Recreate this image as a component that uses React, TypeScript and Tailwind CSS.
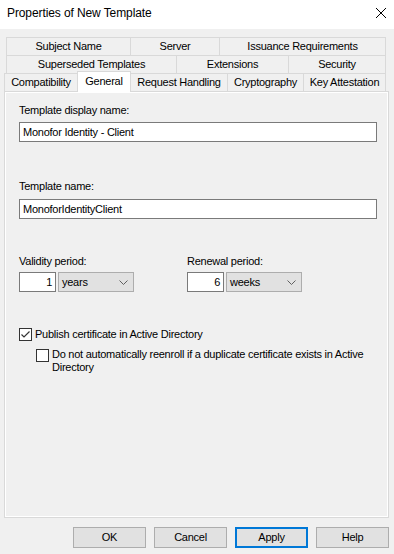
import React from "react"

const tabRows = [
	{
		left: "ml-[6px]",
		tabs: [
			{ label: "Subject Name", w: "w-[124px]" },
			{ label: "Server", w: "w-[89px]" },
			{ label: "Issuance Requirements", w: "w-[167px]" },
		],
	},
	{
		left: "ml-[6px]",
		tabs: [
			{ label: "Superseded Templates", w: "w-[170px]" },
			{ label: "Extensions", w: "w-[112px]" },
			{ label: "Security", w: "w-[98px]" },
		],
	},
]

const bottomTabs = [
	{ label: "Compatibility", w: "w-[73px]" },
	{ label: "General", w: "w-[54px]", active: true },
	{ label: "Request Handling", w: "w-[97px]" },
	{ label: "Cryptography", w: "w-[76px]" },
	{ label: "Key Attestation", w: "w-[83px]" },
]

const Chevron = () => (
	<svg width="9" height="5" viewBox="0 0 9 5" className="text-[#606060]">
		<path d="M0.5 0.5 L4.5 4.5 L8.5 0.5" fill="none" stroke="currentColor" strokeWidth="1" />
	</svg>
)

const Checkbox = ({ checked }: { checked?: boolean }) => (
	<div className="w-[13px] h-[13px] shrink-0 border border-[#333333] bg-white flex items-center justify-center">
		{checked && (
			<svg width="11" height="11" viewBox="0 0 11 11">
				<path d="M1.5 5.5 L4 8 L9.5 2.5" fill="none" stroke="#333333" strokeWidth="1.2" />
			</svg>
		)}
	</div>
)

const PeriodField = ({ label, value, unit, width }: { label: string, value: string, unit: string, width: string }) => (
	<div className={`${width} flex flex-col`}>
		<div className="h-[13px] leading-[13px]">{label}</div>
		<div className="mt-[4px] flex gap-[2px]">
			<div className="w-[37px] h-[20px] border border-[#7a7a7a] bg-white flex items-center justify-end pr-[3px] leading-[13px]">{value}</div>
			<div className="w-[76px] h-[20px] border border-[#adadad] bg-[#e1e1e1] flex items-center justify-between pl-[3px] pr-[5px] leading-[13px]">
				<span>{unit}</span>
				<Chevron />
			</div>
		</div>
	</div>
)

export default function App() {
	return (
		<div className="w-[394px] h-[554px] bg-[#f0f0f0] text-black text-[11px] tracking-[-0.25px] font-['Liberation_Sans',Arial,sans-serif] overflow-hidden flex flex-col">
			{/* title bar */}
			<div className="h-[29px] bg-white flex items-center justify-between pl-[7px] pr-[8px] shrink-0">
				<span className="text-[12px] tracking-[-0.1px] -mt-[3px]">Properties of New Template</span>
				<svg width="10" height="10" viewBox="0 0 10 10" className="-mt-[3px]">
					<path d="M0 0 L10 10 M10 0 L0 10" stroke="#000" strokeWidth="1" />
				</svg>
			</div>

			{/* tab rows */}
			<div className="mt-[8px] flex flex-col">
				{tabRows.map((row, i) => (
					<div key={i} className={`${row.left} flex h-[18px]`}>
						{row.tabs.map((t, j) => (
							<div
								key={t.label}
								className={`${t.w} h-[18px] border-t border-l border-[#d9d9d9] ${j == row.tabs.length - 1 ? "border-r" : ""} flex items-center justify-center leading-[13px]`}
							>
								{t.label}
							</div>
						))}
					</div>
				))}
				<div className="ml-[4px] flex h-[18px] items-start">
					{bottomTabs.map((t, j) => (
						t.active ? (
							<div key={t.label} className={`${t.w} -mt-[2px] h-[21px] -mr-[1px] relative z-10 bg-white border-t border-l border-r border-[#d9d9d9] flex justify-center pt-[3px] leading-[13px]`}>
								{t.label}
							</div>
						) : (
							<div
								key={t.label}
								className={`${t.w} h-[18px] border-t border-l border-[#d9d9d9] ${j == bottomTabs.length - 1 ? "border-r" : ""} flex items-center justify-center leading-[13px]`}
							>
								{t.label}
							</div>
						)
					))}
				</div>
			</div>

			{/* panel */}
			<div className="ml-[4px] w-[385px] h-[427px] border border-[#d9d9d9] shadow-[inset_0_0_0_1px_#ffffff] pl-[14px] flex flex-col shrink-0">
				<div className="mt-[12px] h-[13px] leading-[13px]">Template display name:</div>
				<div className="mt-[5px] w-[358px] h-[20px] border border-[#7a7a7a] bg-white flex items-center pl-[3px] leading-[13px]">Monofor Identity - Client</div>

				<div className="mt-[38px] h-[13px] leading-[13px]">Template name:</div>
				<div className="mt-[6px] w-[358px] h-[20px] border border-[#7a7a7a] bg-white flex items-center pl-[3px] leading-[13px]">MonoforIdentityClient</div>

				<div className="mt-[36px] flex">
					<PeriodField label="Validity period:" value="1" unit="years" width="w-[168px]" />
					<PeriodField label="Renewal period:" value="6" unit="weeks" width="w-[120px]" />
				</div>

				<div className="mt-[36px] flex items-start">
					<Checkbox checked />
					<span className="ml-[3px] leading-[13px]">Publish certificate in Active Directory</span>
				</div>
				<div className="mt-[8px] ml-[17px] flex items-start">
					<Checkbox />
					<span className="ml-[3px] -mt-[1px] leading-[13px] whitespace-nowrap">
						Do not automatically reenroll if a duplicate certificate exists in Active
						<br />
						Directory
					</span>
				</div>
			</div>

			{/* buttons */}
			<div className="mt-[9px] flex justify-end gap-[8px] pr-[5px]">
				{["OK", "Cancel", "Apply", "Help"].map((b) => (
					<button
						key={b}
						className={`w-[73px] h-[21px] bg-[#e1e1e1] flex items-center justify-center leading-[13px] ${b == "Apply" ? "border-2 border-[#0078d7]" : "border border-[#adadad]"}`}
					>
						{b}
					</button>
				))}
			</div>
		</div>
	)
}
